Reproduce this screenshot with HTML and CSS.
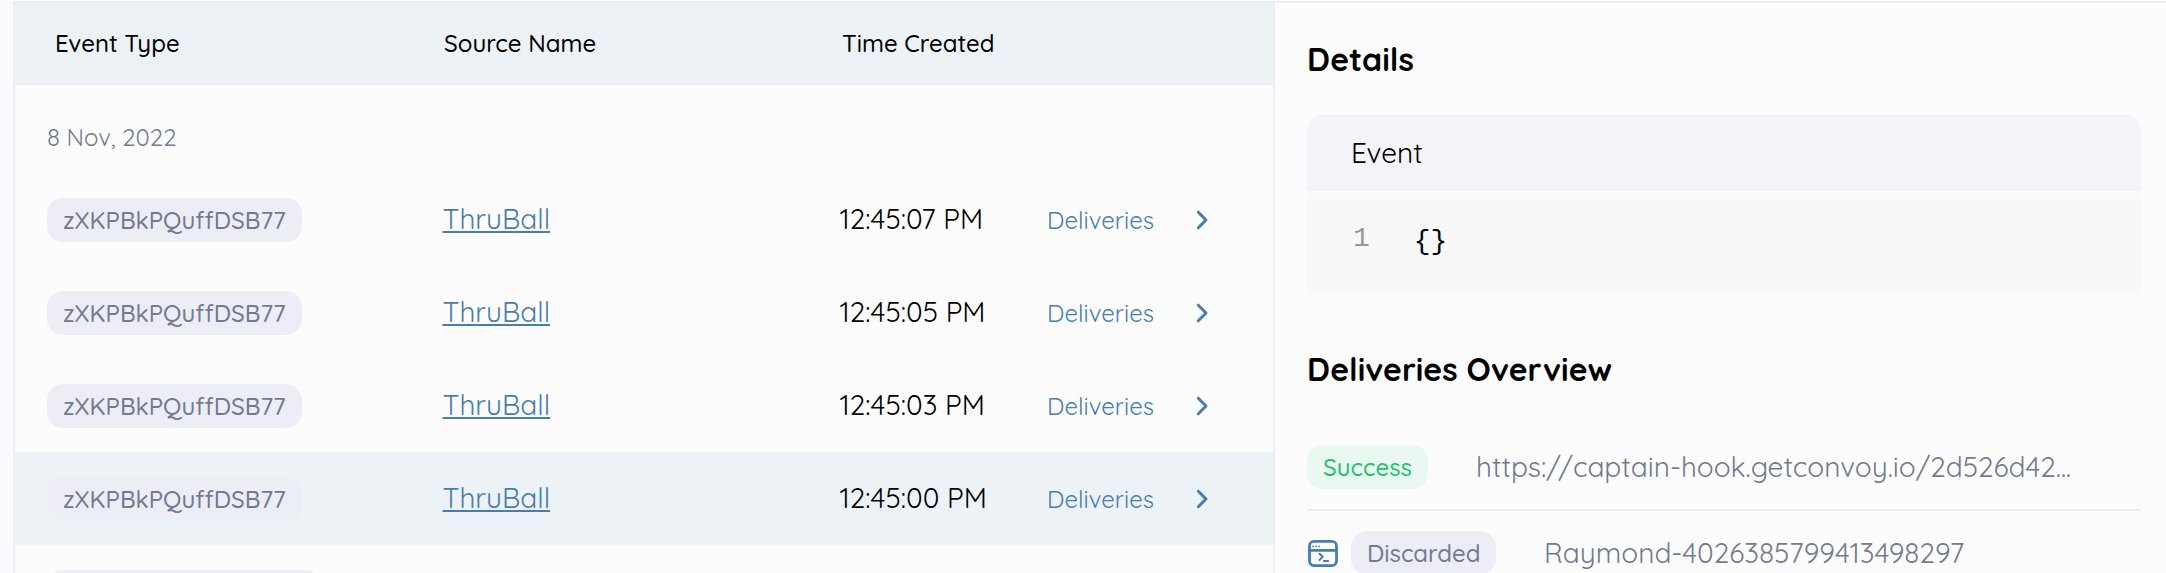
FILE: index.html
```
<!DOCTYPE html>
<html lang="en">
<head>
<meta charset="utf-8">
<title>Events</title>
<link rel="stylesheet" href="styles.css">
</head>
<body>
<svg class="defs" width="0" height="0">
  <symbol id="chevron" viewBox="0 0 14 20"><path d="M3.300 2.200L11 10L3.300 17.800" fill="none" stroke="currentColor" stroke-width="3" stroke-linecap="round" stroke-linejoin="round"/></symbol>
</svg>
<div class="page">
  <main class="events">
    <div class="table-head">
      <span>Event Type</span>
      <span>Source Name</span>
      <span>Time Created</span>
    </div>
    <div class="date">8 Nov, 2022</div>
    <div class="row">
      <div class="cell"><span class="tag">zXKPBkPQuffDSB77</span></div>
      <div class="cell source">ThruBall</div>
      <div class="cell time">12:45:07 PM</div>
      <div class="cell deliveries">Deliveries</div>
      <svg class="chevron"><use href="#chevron"/></svg>
    </div>
    <div class="row">
      <div class="cell"><span class="tag">zXKPBkPQuffDSB77</span></div>
      <div class="cell source">ThruBall</div>
      <div class="cell time">12:45:05 PM</div>
      <div class="cell deliveries">Deliveries</div>
      <svg class="chevron"><use href="#chevron"/></svg>
    </div>
    <div class="row">
      <div class="cell"><span class="tag">zXKPBkPQuffDSB77</span></div>
      <div class="cell source">ThruBall</div>
      <div class="cell time">12:45:03 PM</div>
      <div class="cell deliveries">Deliveries</div>
      <svg class="chevron"><use href="#chevron"/></svg>
    </div>
    <div class="row selected">
      <div class="cell"><span class="tag">zXKPBkPQuffDSB77</span></div>
      <div class="cell source">ThruBall</div>
      <div class="cell time">12:45:00 PM</div>
      <div class="cell deliveries">Deliveries</div>
      <svg class="chevron"><use href="#chevron"/></svg>
    </div>
    <div class="row last">
      <div class="cell"><span class="tag wide"></span></div>
    </div>
  </main>
  <aside class="panel">
    <h2 class="title details">Details</h2>
    <div class="code-head">Event</div>
    <div class="code"><span class="line-no">1</span><span class="source-code">{}</span></div>
    <h2 class="title overview">Deliveries Overview</h2>
    <div class="delivery">
      <span class="tag success">Success</span>
      <span class="endpoint">https://captain-hook.getconvoy.io/2d526d42...</span>
    </div>
    <div class="delivery second">
      <svg class="terminal" viewBox="0 0 32 28">
        <g fill="none" stroke="currentColor" stroke-width="2.800" stroke-linecap="round" stroke-linejoin="round">
          <rect x="2.500" y="1.400" width="27" height="24.200" rx="4.500"/>
          <path d="M2.500 10.300H29.500"/>
          <path d="M12.500 13.700L15.700 16.800L12.500 20M16.800 20.900H21.200" stroke-width="2"/>
        </g>
        <g fill="currentColor"><rect x="5.300" y="5.700" width="1.800" height="1.500"/><rect x="8.300" y="5.700" width="1.800" height="1.500"/><rect x="11.300" y="5.700" width="1.800" height="1.500"/></g>
      </svg>
      <span class="tag discarded">Discarded</span>
      <span class="endpoint">Raymond-4026385799413498297</span>
    </div>
  </aside>
</div>
</body>
</html>
```
FILE: styles.css
```
* { box-sizing: border-box; }

body {
  margin: 0;
  background: #fafafe;
  color: #000;
  font-family: Quicksand, Lato, sans-serif;
}

.defs { position: absolute; }

.page {
  display: flex;
  height: 573px;
  margin-left: 13px;
  padding-top: 1px;
  background: #fcfcfc;
}

.events {
  width: 1262px;
  flex: none;
  border: 2px solid #ededf5;
  border-bottom: 0;
}

.table-head {
  display: grid;
  grid-template-columns: 389px 398px 1fr;
  align-items: center;
  height: 82px;
  padding-left: 40px;
  border-bottom: 2px solid #ededf5;
  background: #ecf2f6;
  font-size: 24px;
  font-weight: 500;
  line-height: 32px;
}

.date {
  height: 88px;
  padding: 37px 0 0 32px;
  color: #737a91;
  font-size: 24px;
  font-weight: 400;
  line-height: 30px;
}

.row {
  display: grid;
  grid-template-columns: 395.5px 397px 207.5px 148px 20px;
  align-items: center;
  height: 93px;
  padding: 1px 0 0 32px;
}
.row.selected { background: #ecf2f6; }
.row.last {
  height: 28px;
  align-items: start;
  padding-top: 25px;
  overflow: hidden;
}

.tag {
  display: block;
  width: 255px;
  height: 44px;
  padding-left: 16px;
  border-radius: 16px;
  background: #ededf5;
  color: #737a91;
  font-size: 24px;
  font-weight: 500;
  line-height: 44px;
  white-space: nowrap;
}
.tag.wide { width: 275px; }

.source, .time {
  padding-bottom: 2px;
  font-size: 28px;
  font-weight: 400;
  line-height: 34px;
  white-space: nowrap;
}
.source {
  color: #477db3;
  text-decoration: underline;
  text-decoration-thickness: 2px;
  text-underline-offset: 2px;
  text-decoration-skip-ink: none;
}
.deliveries {
  color: #477db3;
  font-size: 24px;
  font-weight: 400;
  line-height: 30px;
}
.chevron { width: 14px; height: 20px; color: #477db3; }

.panel {
  flex: 1;
  padding: 0 25px 0 32px;
  border-top: 2px solid #ededf5;
}
.title {
  margin: 0;
  height: 40px;
  font-size: 32px;
  font-weight: 700;
  line-height: 42px;
}
.details { margin-top: 35px; }
.overview { margin-top: 55px; }

.code-head {
  height: 76px;
  margin-top: 37px;
  padding-left: 44px;
  border-radius: 16px 16px 0 0;
  background: #f3f3f9;
  font-size: 28px;
  font-weight: 400;
  line-height: 76px;
}
.code {
  display: flex;
  gap: 44px;
  height: 100px;
  margin-top: 2px;
  padding: 29px 0 0 46px;
  border-radius: 8px;
  background: #f8f8f8;
  font-family: "Liberation Mono", monospace;
  font-size: 28px;
  line-height: 34px;
}
.line-no { color: #999; }
.source-code { padding-top: 3px; color: #000a1a; }

.delivery {
  display: flex;
  align-items: center;
  height: 66px;
  margin-top: 57px;
  padding-bottom: 20px;
  border-bottom: 2px solid #ededf5;
}
.delivery.second {
  align-items: flex-start;
  height: 62px;
  margin-top: 0;
  padding: 20px 0 0;
  border: 0;
  overflow: hidden;
}
.tag.success {
  width: 121px;
  background: #e9f8f1;
  color: #25c26e;
}
.tag.discarded { width: 145px; margin-left: 12px; }
.endpoint {
  margin-left: 48px;
  color: #737a91;
  font-size: 28px;
  font-weight: 400;
  line-height: 44px;
  white-space: nowrap;
}
.terminal { width: 32px; height: 28px; margin-top: 9px; color: #477db3; }
```
